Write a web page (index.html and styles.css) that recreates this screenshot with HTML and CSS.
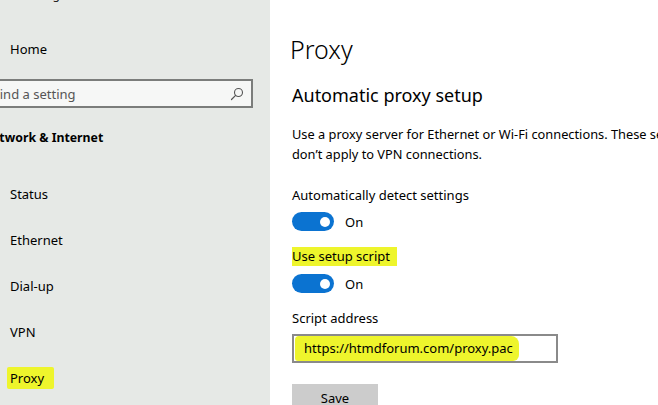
FILE: index.html
```html
<!DOCTYPE html>
<html>
<head>
<meta charset="utf-8">
<link rel="stylesheet" href="styles.css">
</head>
<body>
<div class="app">
  <aside class="sidebar">
    <div class="app-title">Settings</div>
    <div class="home">Home</div>
    <div class="search">
      <span class="search-text">Find a setting</span>
      <svg class="search-icon" width="14" height="14" viewBox="0 0 14 14">
        <circle cx="8.5" cy="5.5" r="4" fill="none" stroke="#555" stroke-width="1.1"/>
        <line x1="5.6" y1="8.4" x2="1.5" y2="12.5" stroke="#555" stroke-width="1.2" stroke-linecap="round"/>
      </svg>
    </div>
    <div class="group-title">Network &amp; Internet</div>
    <nav class="nav">
      <div class="nav-item">Status</div>
      <div class="nav-item">Ethernet</div>
      <div class="nav-item">Dial-up</div>
      <div class="nav-item">VPN</div>
      <div class="nav-item"><span class="mark mark-nav">Proxy</span></div>
    </nav>
  </aside>
  <main class="content">
    <h1 class="page-title">Proxy</h1>
    <h2 class="section-title">Automatic proxy setup</h2>
    <p class="desc">Use a proxy server for Ethernet or Wi-Fi connections. These settings don’t apply to VPN connections.</p>
    <div class="label label-first">Automatically detect settings</div>
    <div class="toggle-row toggle-first">
      <span class="toggle"><span class="knob"></span></span>
      <span class="toggle-state">On</span>
    </div>
    <div class="label label-gap"><span class="mark mark-label">Use setup script</span></div>
    <div class="toggle-row toggle-second">
      <span class="toggle"><span class="knob"></span></span>
      <span class="toggle-state">On</span>
    </div>
    <div class="label label-gap">Script address</div>
    <div class="textbox"><span class="mark mark-url">https://htmdforum.com/proxy.pac</span></div>
    <button class="save">Save</button>
  </main>
</div>
</body>
</html>
```

FILE: styles.css
```css
html, body {
  margin: 0;
  padding: 0;
  width: 658px;
  height: 405px;
  overflow: hidden;
  background: #ffffff;
}
body {
  font-family: "Noto Sans", "Open Sans", sans-serif;
  color: #000;
  font-size: 13px;
}
.app {
  display: flex;
  width: 658px;
  height: 405px;
}
.sidebar {
  width: 270px;
  flex: none;
  background: #e6e9e6;
  display: flex;
  flex-direction: column;
  overflow: hidden;
}
.app-title {
  margin-top: -14px;
  height: 17px;
  line-height: 17px;
  font-size: 12px;
  padding-left: 20px;
  color: #222;
}
.home {
  margin-top: 28px;
  height: 36px;
  line-height: 36px;
  padding-left: 10px;
}
.search {
  margin-top: 12px;
  margin-left: -8px;
  width: 261px;
  height: 29px;
  box-sizing: border-box;
  border: 2px solid #7b7d7b;
  background: #f6f7f6;
  display: flex;
  align-items: center;
  justify-content: space-between;
  padding: 0 7px 0 0;
}
.search-text {
  color: #555;
  font-size: 13px;
  margin-left: -1px;
}
.search-icon {
  display: block;
}
.group-title {
  margin-top: 16px;
  margin-left: -18px;
  height: 28px;
  line-height: 28px;
  font-weight: bold;
  font-size: 12.3px;
  white-space: nowrap;
}
.nav {
  margin-top: 19px;
  display: flex;
  flex-direction: column;
}
.nav-item {
  height: 46px;
  line-height: 46px;
  padding-left: 10px;
}
.mark {
  background: #eef52c;
}
.mark-nav {
  padding: 2px 10px 2px 3px;
  margin-left: -3px;
  border-radius: 2px;
}
.content {
  flex: 1;
  padding-left: 22px;
  display: flex;
  flex-direction: column;
  align-items: flex-start;
  min-width: 0;
  overflow: hidden;
}
.page-title {
  margin: 30px 0 0 -2px;
  height: 38px;
  line-height: 38px;
  font-size: 25px;
  font-weight: 300;
}
.section-title {
  margin: 12px 0 0 0;
  height: 30px;
  line-height: 30px;
  font-size: 18px;
  font-weight: 400;
}
.desc {
  margin: 14px 0 0 0;
  width: 420px;
  flex: none;
  line-height: 20px;
  font-size: 12.8px;
}
.label {
  height: 20px;
  line-height: 20px;
}
.label-first {
  margin-top: 21px;
}
.label-gap {
  margin-top: 15px;
}
.mark-label {
  display: inline-block;
  padding: 0 7px 0 0;
  line-height: 19px;
}
.toggle-row {
  display: flex;
  align-items: center;
  height: 19px;
}
.toggle-first {
  margin-top: 7px;
}
.toggle-second {
  margin-top: 8px;
}
.toggle {
  width: 42px;
  height: 19px;
  border-radius: 10px;
  background: #0b73d1;
  display: flex;
  align-items: center;
  justify-content: flex-end;
  padding-right: 4px;
  box-sizing: border-box;
}
.knob {
  width: 10px;
  height: 10px;
  border-radius: 50%;
  background: #fff;
}
.toggle-state {
  margin-left: 11px;
}
.textbox {
  margin-top: 6px;
  width: 266px;
  height: 29px;
  box-sizing: border-box;
  border: 2px solid #8a8a8a;
  display: flex;
  align-items: center;
  padding-left: 1px;
}
.mark-url {
  display: inline-block;
  padding: 3px 6px 3px 9px;
  line-height: 19px;
  border-radius: 4px 8px 6px 3px;
}
.save {
  margin-top: 21px;
  width: 86px;
  height: 32px;
  flex: none;
  border: none;
  background: #cccccc;
  font-family: inherit;
  font-size: 13px;
  color: #000;
  padding: 0 0 4px 0;
  line-height: 20px;
}
```
